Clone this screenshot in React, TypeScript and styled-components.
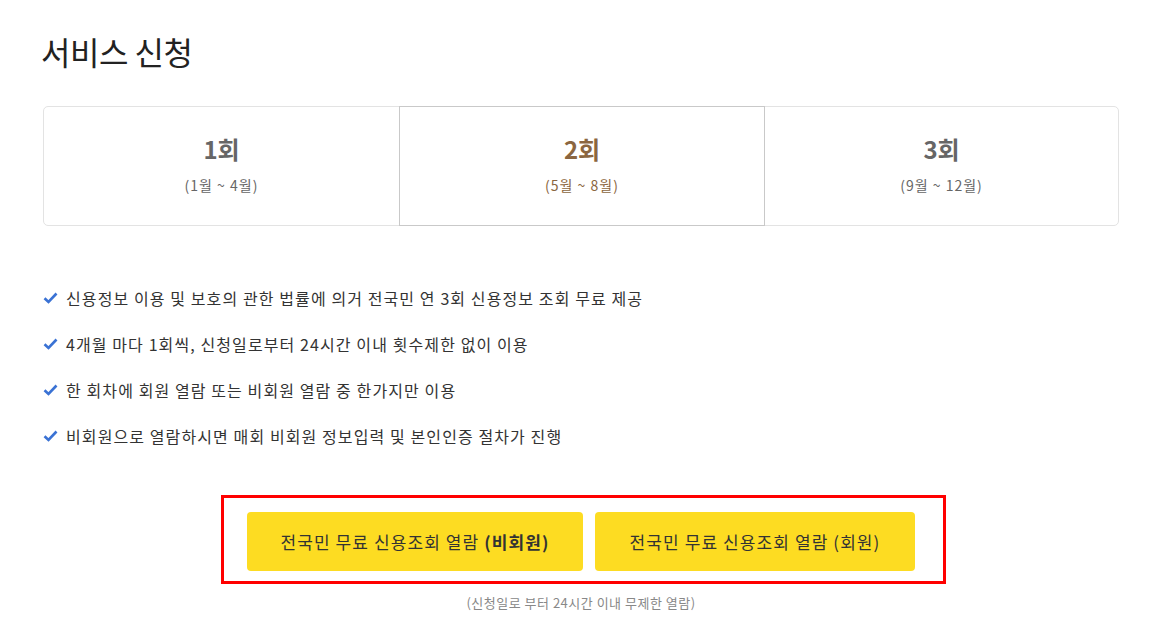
import React from 'react';
import styled, { createGlobalStyle } from 'styled-components';

const GlobalStyle = createGlobalStyle`
  body {
    margin: 0;
    background: #fff;
    font-family: "Noto Sans CJK KR", "Noto Sans", sans-serif;
    color: #333;
  }
`;

const Page = styled.div`
  width: 1076px;
  padding: 28px 0 0 43px;
`;

const Title = styled.h2`
  margin: 0 0 31px -2px;
  font-size: 32px;
  font-weight: 400;
  line-height: 47px;
  color: #222;
  letter-spacing: -0.5px;
`;

const Rounds = styled.div`
  display: grid;
  grid-template-columns: 355px 366px 1fr;
  height: 120px;
  border: 1px solid #e3e3e3;
  border-radius: 5px;
  box-sizing: border-box;
`;

const Round = styled.div<{ $active?: boolean }>`
  display: flex;
  flex-direction: column;
  align-items: center;
  justify-content: center;
  gap: 10px;
  padding-bottom: 5px;
  margin: ${(p) => (p.$active ? '-1px 0' : '0')};
  border: ${(p) => (p.$active ? '1px solid #c9c9c9' : 'none')};
  color: ${(p) => (p.$active ? '#8b6640' : '#666')};
`;

const RoundName = styled.div`
  font-size: 24px;
  font-weight: 700;
  line-height: 32px;
`;

const RoundMonths = styled.div`
  font-size: 14px;
  line-height: 20px;
  letter-spacing: 1px;
`;

const Notes = styled.ul`
  list-style: none;
  margin: 60px 0 0;
  padding: 0;
  display: flex;
  flex-direction: column;
  gap: 22px;
`;

const Note = styled.li`
  display: flex;
  align-items: center;
  gap: 8px;
  font-size: 16px;
  line-height: 24px;
  letter-spacing: 1.1px;
  color: #333;
`;

const Check = () => (
  <svg width="15" height="12" viewBox="0 0 15 12">
    <path d="M1.5 6.2 L5.5 10 L13.5 1.5" fill="none" stroke="#3a72d4" strokeWidth="2.6" strokeLinejoin="miter" />
  </svg>
);

const Actions = styled.div`
  display: flex;
  flex-direction: column;
  align-items: center;
  margin-top: 47px;
`;

const Highlight = styled.div`
  display: flex;
  gap: 12px;
  padding: 14px 28px 10px 23px;
  border: 3px solid #ff0000;
  margin-left: 5px;
`;

const OpenButton = styled.button<{ $width: number }>`
  width: ${(p) => p.$width}px;
  height: 59px;
  border: none;
  border-radius: 4px;
  background: #fddc22;
  color: #333;
  font-family: "Noto Sans CJK KR", "Noto Sans", sans-serif;
  font-size: 17px;
  letter-spacing: 1.1px;
  padding: 0;
  cursor: pointer;

  b {
    font-weight: 700;
  }
`;

const Caption = styled.p`
  margin: 10px 0 0;
  font-size: 13px;
  line-height: 18px;
  letter-spacing: 0.5px;
  color: #888;
`;

const rounds = [
  { name: '1회', months: '(1월 ~ 4월)' },
  { name: '2회', months: '(5월 ~ 8월)', active: true },
  { name: '3회', months: '(9월 ~ 12월)' },
];

const notes = [
  '신용정보 이용 및 보호의 관한 법률에 의거 전국민 연 3회 신용정보 조회 무료 제공',
  '4개월 마다 1회씩, 신청일로부터 24시간 이내 횟수제한 없이 이용',
  '한 회차에 회원 열람 또는 비회원 열람 중 한가지만 이용',
  '비회원으로 열람하시면 매회 비회원 정보입력 및 본인인증 절차가 진행',
];

export default function App() {
  return (
    <>
      <GlobalStyle />
      <Page>
        <Title>서비스 신청</Title>
        <Rounds>
          {rounds.map((r) => (
            <Round key={r.name} $active={r.active}>
              <RoundName>{r.name}</RoundName>
              <RoundMonths>{r.months}</RoundMonths>
            </Round>
          ))}
        </Rounds>
        <Notes>
          {notes.map((n) => (
            <Note key={n}>
              <Check />
              {n}
            </Note>
          ))}
        </Notes>
        <Actions>
          <Highlight>
            <OpenButton $width={336}>
              전국민 무료 신용조회 열람 <b>(비회원)</b>
            </OpenButton>
            <OpenButton $width={320}>전국민 무료 신용조회 열람 (회원)</OpenButton>
          </Highlight>
          <Caption>(신청일로 부터 24시간 이내 무제한 열람)</Caption>
        </Actions>
      </Page>
    </>
  );
}
